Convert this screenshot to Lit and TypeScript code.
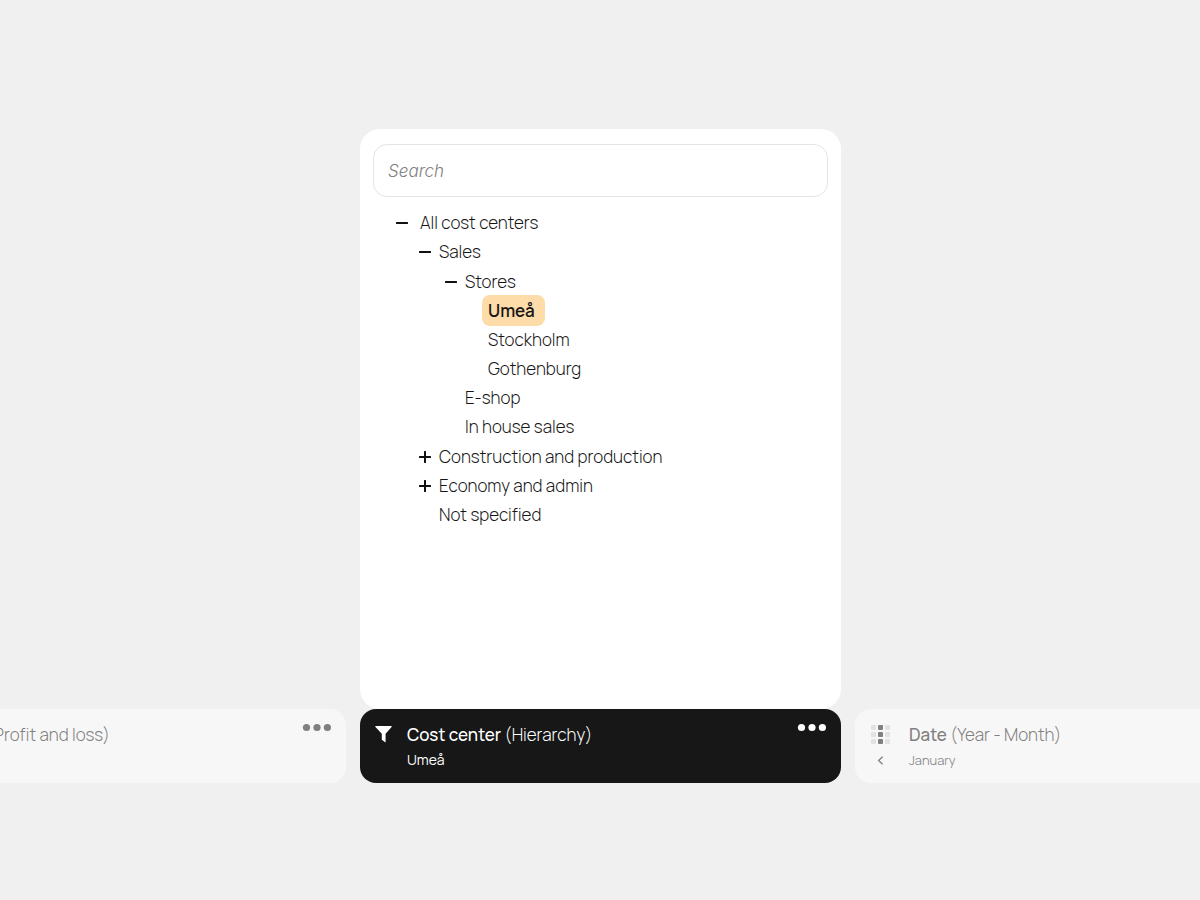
import { LitElement, html, css, svg, nothing } from "lit";
import { customElement, property, state } from "lit/decorators.js";
import { classMap } from "lit/directives/class-map.js";

interface TreeItem {
  label: string;
  open?: boolean;
  children?: TreeItem[];
}

const COST_CENTERS: TreeItem[] = [
  {
    label: "All cost centers",
    open: true,
    children: [
      {
        label: "Sales",
        open: true,
        children: [
          {
            label: "Stores",
            open: true,
            children: [{ label: "Umeå" }, { label: "Stockholm" }, { label: "Gothenburg" }],
          },
          { label: "E-shop" },
          { label: "In house sales" },
        ],
      },
      { label: "Construction and production", children: [] },
      { label: "Economy and admin", children: [] },
      { label: "Not specified" },
    ],
  },
];

const FONT = css`"Manrope", "Inter", "Liberation Sans", sans-serif`;

@customElement("hierarchy-tree")
export class HierarchyTree extends LitElement {
  @property() selected = "";
  @state() private items = COST_CENTERS;

  static styles = css`
    :host {
      display: block;
      font: 300 17px/29px ${FONT};
      color: #161616;
    }
    ul {
      list-style: none;
      margin: 0;
      padding: 0;
    }
    .level-1 {
      padding-left: 23px;
    }
    .level-2 {
      padding: 1px 0 1px 26px;
    }
    .level-3 {
      padding-left: 29px;
    }
    .row {
      display: flex;
      align-items: center;
      gap: 8px;
      height: 29px;
    }
    .level-0 > li > .row {
      gap: 12px;
    }
    .level-3 > li > .row {
      gap: 0;
    }
    .toggle,
    .name {
      appearance: none;
      border: 0;
      margin: 0;
      padding: 0;
      background: none;
      font: inherit;
      color: inherit;
      white-space: nowrap;
      cursor: pointer;
    }
    .toggle,
    .spacer {
      display: block;
      flex: none;
      width: 12px;
      height: 12px;
    }
    .toggle svg {
      display: block;
    }
    .level-3 .name {
      margin-left: -4px;
      padding: 1px 10px 1px 6px;
      border-radius: 8px;
    }
    .name.selected {
      background: #fedcaa;
      font-weight: 600;
    }
  `;

  private toggle(item: TreeItem) {
    item.open = !item.open;
    this.items = [...this.items];
  }

  private renderLevel(items: TreeItem[], level: number): unknown {
    return html`<ul class="level-${level}">
      ${items.map(
        (item) => html`<li>
          <div class="row">
            ${item.children
              ? html`<button
                  class="toggle"
                  aria-label=${item.label}
                  aria-expanded=${item.open ? "true" : "false"}
                  @click=${() => this.toggle(item)}
                >
                  <svg width="12" height="12" viewBox="0 0 12 12" stroke="#111" stroke-width="2" stroke-linecap="round">
                    <path d="M.8 6H11.2" />
                    ${item.open ? nothing : svg`<path d="M6 .8V11.2" />`}
                  </svg>
                </button>`
              : html`<span class="spacer"></span>`}
            <button
              class=${classMap({ name: true, selected: item.label === this.selected })}
              @click=${() => (this.selected = item.label)}
            >${item.label}</button>
          </div>
          ${item.open && item.children?.length ? this.renderLevel(item.children, level + 1) : nothing}
        </li>`
      )}
    </ul>`;
  }

  render() {
    return this.renderLevel(this.items, 0);
  }
}

@customElement("dimension-card")
export class DimensionCard extends LitElement {
  @property() heading = "";
  @property() detail = "";
  @property() value = "";
  @property() icon = "";
  @property({ type: Boolean, reflect: true }) active = false;

  static styles = css`
    :host {
      display: block;
      font: 300 17px/24px ${FONT};
      color: #808080;
    }
    .card {
      box-sizing: border-box;
      min-height: 74px;
      padding: 14px 15px 10px;
      border-radius: 16px;
      background: #f7f7f7;
      display: grid;
      grid-template-columns: 20px 1fr auto;
      column-gap: 16px;
      align-items: start;
    }
    .card.grid {
      column-gap: 19px;
    }
    .card.filter {
      column-gap: 12px;
    }
    :host([active]) .card {
      background: #171717;
      color: #fff;
    }
    .icons {
      display: grid;
      justify-items: center;
      gap: 12px;
      padding-top: 2px;
    }
    :host([active]) .icons {
      justify-items: start;
    }
    .icons svg {
      display: block;
    }
    .title {
      margin: 0;
      font: inherit;
      white-space: nowrap;
    }
    .title strong {
      font-weight: 500;
    }
    .value {
      margin: 0;
      font-size: 13px;
      line-height: 26px;
    }
    :host([active]) .value {
      font-size: 14px;
      font-weight: 400;
    }
    .previous,
    .more {
      display: block;
      appearance: none;
      border: 0;
      padding: 0;
      background: none;
      color: inherit;
      cursor: pointer;
    }
    .more svg {
      display: block;
    }
  `;

  private renderIcon() {
    if (this.icon === "filter") {
      return html`<svg width="18" height="18" viewBox="0 0 18 18" fill="currentColor">
        <path d="M.6 1H16.4L16.8 1.8L10.6 8.8V17.4L6.8 14.8V8.8L.2 1.8Z" />
      </svg>`;
    }
    if (this.icon === "grid") {
      const cells = [0, 1, 2].flatMap((row) =>
        [0, 1, 2].map(
          (col) => svg`<rect x=${col * 7} y=${row * 7} width="5" height="5" rx="1"
            fill=${col === 1 ? "#808080" : "#e2e2e2"} />`
        )
      );
      return html`<svg width="19" height="19" viewBox="0 0 19 19">${cells}</svg>
        <button class="previous" aria-label="Previous month">
          <svg width="6" height="9" viewBox="0 0 6 9" fill="none" stroke="currentColor" stroke-width="1.3">
            <path d="M5.6 .7L1.6 4.5L5.6 8.3" />
          </svg>
        </button>`;
    }
    return nothing;
  }

  render() {
    return html`<article class="card ${this.icon}">
      <div class="icons">${this.renderIcon()}</div>
      <div class="text">
        <h2 class="title"><strong>${this.heading}</strong> (${this.detail})</h2>
        ${this.value ? html`<p class="value">${this.value}</p>` : nothing}
      </div>
      <button class="more" aria-label="More options">
        <svg width="30" height="9" viewBox="0 0 30 9" fill="currentColor">
          <circle cx="5.5" cy="4.5" r="3.6" />
          <circle cx="16" cy="4.5" r="3.6" />
          <circle cx="26.4" cy="4.5" r="3.6" />
        </svg>
      </button>
    </article>`;
  }
}

@customElement("app-root")
export class AppRoot extends LitElement {
  static styles = css`
    :host {
      display: flex;
      align-items: center;
      box-sizing: border-box;
      min-height: 100vh;
      padding-top: 12px;
      background: #f0f0f0;
      overflow: hidden;
      font-family: ${FONT};
    }
    .strip {
      flex: 1;
      min-width: 0;
      display: flex;
      justify-content: center;
      align-items: flex-end;
      gap: 14px;
      padding-left: 1px;
    }
    .slot {
      flex: none;
      width: min(481px, 100vw);
    }
    .panel {
      box-sizing: border-box;
      min-height: 580px;
      padding: 15px 13px;
      border-radius: 20px;
      background: #fff;
    }
    .search {
      box-sizing: border-box;
      display: block;
      width: 100%;
      height: 53px;
      margin: 0;
      padding: 0 14px;
      border: 1px solid #e4e4e4;
      border-radius: 14px;
      background: #fff;
      outline: none;
      font: 300 17px/24px ${FONT};
      color: #161616;
    }
    .search::placeholder {
      color: #808080;
      opacity: 1;
      font-family: "Inter", sans-serif;
      font-style: italic;
    }
    .tree {
      padding: 11px 10px 0 23px;
    }
  `;

  render() {
    return html`<main class="strip">
      <dimension-card class="slot" heading="Account" detail="Profit and loss"></dimension-card>
      <div class="slot">
        <section class="panel">
          <input class="search" type="search" placeholder="Search" aria-label="Search" />
          <hierarchy-tree class="tree" selected="Umeå"></hierarchy-tree>
        </section>
        <dimension-card active icon="filter" heading="Cost center" detail="Hierarchy" value="Umeå"></dimension-card>
      </div>
      <dimension-card class="slot" icon="grid" heading="Date" detail="Year - Month" value="January"></dimension-card>
    </main>`;
  }
}
